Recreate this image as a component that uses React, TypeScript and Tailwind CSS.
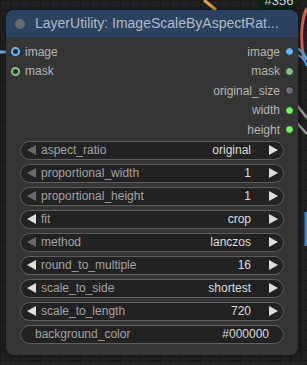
const inputs = [
  { name: "image", color: "#64b5f6" },
  { name: "mask", color: "#81c784" },
];

const outputs = [
  { name: "image", color: "#64b5f6" },
  { name: "mask", color: "#81c784" },
  { name: "original_size", color: "#6c6c7c" },
  { name: "width", color: "#6cf25a" },
  { name: "height", color: "#6cf25a" },
];

const widgets = [
  { label: "aspect_ratio", value: "original", first: true },
  { label: "proportional_width", value: "1", first: true },
  { label: "proportional_height", value: "1", first: true },
  { label: "fit", value: "crop", first: false },
  { label: "method", value: "lanczos", first: true },
  { label: "round_to_multiple", value: "16", first: false },
  { label: "scale_to_side", value: "shortest", first: false },
  { label: "scale_to_length", value: "720", first: false },
];

function Arrow({ dir, dim }: { dir: "left" | "right"; dim?: boolean }) {
  return (
    <svg width="9" height="10" viewBox="0 0 9 10" className="shrink-0">
      <polygon
        points={dir === "left" ? "9,0 9,10 0,5" : "0,0 0,10 9,5"}
        fill={dim ? "#6a6a6a" : "#dddddd"}
      />
    </svg>
  );
}

function Wires() {
  return (
    <svg width="307" height="365" className="absolute left-0 top-0 pointer-events-none">
      <path d="M204 0 L216 10" stroke="#e8a23a" strokeWidth="3" fill="none" />
      <path d="M0 52 L10 52" stroke="#64b5f6" strokeWidth="3" fill="none" />
      <path d="M307 8 C301 20 300 40 304 60" stroke="#e05a5a" strokeWidth="3" fill="none" />
      <path d="M296 48 C302 50 305 55 307 60" stroke="#4aa3e8" strokeWidth="2.5" fill="none" />
      <path d="M297 55 C302 56 305 60 307 66" stroke="#4aa3e8" strokeWidth="2" fill="none" />
      <path d="M296 104 L307 118" stroke="#8fa68f" strokeWidth="2.5" fill="none" />
      <path d="M296 122 L307 134" stroke="#8fa68f" strokeWidth="2.5" fill="none" />
      <path d="M306 212 L306 246" stroke="#3b82c4" strokeWidth="3" fill="none" />
    </svg>
  );
}

export default function App() {
  return (
    <div
      className="relative w-[307px] h-[365px] overflow-hidden bg-[#222222] bg-[linear-gradient(#191919_1px,transparent_1px),linear-gradient(90deg,#191919_1px,transparent_1px)] bg-[size:10px_10px]"
      style={{ fontFamily: '"Liberation Sans", Arial, sans-serif' }}
    >
      <Wires />
      <div className="absolute left-[258px] top-[-8px] w-[42px] h-[17px] rounded-md bg-[#10221a] text-[#cfd8d0] text-[13px] leading-[17px] text-center">
        #356
      </div>
      <div className="relative pt-[10px] pl-[6px]">
        <div className="w-[292px] rounded-lg bg-[#353535] shadow-[0_0_6px_rgba(0,0,0,0.6)]">
          <div className="h-[27px] rounded-t-lg bg-[#2b4262] flex items-center pl-[9px] gap-[10px]">
            <div className="w-[10px] h-[10px] rounded-full bg-[#6a6a6a]" />
            <span className="text-[14px] text-[#b3b9c2] whitespace-nowrap">
              LayerUtility: ImageScaleByAspectRat...
            </span>
          </div>

          <div className="grid grid-cols-2 pt-[5px]">
            <div className="flex flex-col">
              {inputs.map((s) => (
                <div key={s.name} className="h-[19.5px] flex items-center pl-[5px] gap-[5px]">
                  <div
                    className="w-[9px] h-[9px] rounded-full bg-[#2a2a2a] border-[2.5px]"
                    style={{ borderColor: s.color }}
                  />
                  <span className="text-[12px] text-[#b5b5b5]">{s.name}</span>
                </div>
              ))}
            </div>
            <div className="flex flex-col items-end">
              {outputs.map((s) => (
                <div key={s.name} className="h-[19.5px] flex items-center pr-[4px] gap-[5px]">
                  <span className="text-[12px] text-[#b5b5b5]">{s.name}</span>
                  <div
                    className="w-[9px] h-[9px] rounded-full border border-[#222]"
                    style={{ backgroundColor: s.color }}
                  />
                </div>
              ))}
            </div>
          </div>

          <div className="flex flex-col gap-[4px] px-[14px] pt-[1px] pb-[11px]">
            {widgets.map((w) => (
              <div
                key={w.label}
                className="h-[19px] rounded-full bg-[#222222] border border-[#5e5e5e] flex items-center pl-[6px] pr-[5px] text-[12px]"
              >
                <Arrow dir="left" dim={w.first} />
                <span className="ml-[5px] text-[#a3a3a3] whitespace-nowrap">{w.label}</span>
                <span className="ml-auto mr-[18px] text-[#dddddd]">{w.value}</span>
                <Arrow dir="right" />
              </div>
            ))}
            <div className="h-[19px] rounded-full bg-[#222222] border border-[#5e5e5e] flex items-center pl-[14px] pr-[14px] text-[12px]">
              <span className="text-[#a3a3a3]">background_color</span>
              <span className="ml-auto text-[#dddddd]">#000000</span>
            </div>
          </div>
        </div>
      </div>
    </div>
  );
}
